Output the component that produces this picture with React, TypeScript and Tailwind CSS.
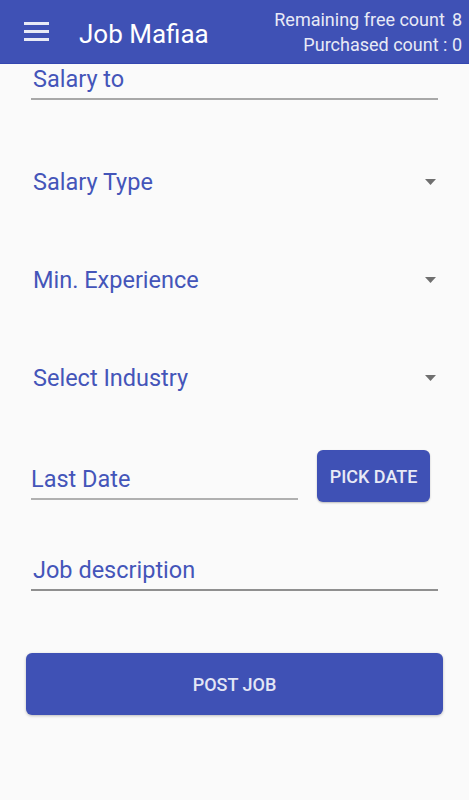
import React from "react";

const Arrow = () => (
  <svg width="11" height="6" viewBox="0 0 11 6" className="shrink-0">
    <path d="M0 0 H11 L5.5 6 Z" fill="#6f6f6f" />
  </svg>
);

const Spinner = ({ label }: { label: string }) => (
  <div className="h-[98px] flex items-center justify-between pl-[33px] pr-[33px]">
    <span className="text-[23.5px] leading-[30px] text-[#4455b9]">{label}</span>
    <Arrow />
  </div>
);

export default function App() {
  return (
    <div
      className="w-[469px] h-[800px] bg-[#fafafa] flex flex-col"
      style={{ fontFamily: "Roboto, 'Noto Sans', sans-serif" }}
    >
      <header className="h-[64px] bg-[#3f51b5] border-b border-[#3447b0] flex items-center pl-[24px] pr-[7px] shrink-0">
        <div className="flex flex-col gap-[5px] w-[25px]">
          <div className="h-[3px] bg-[#e8eaf6]" />
          <div className="h-[3px] bg-[#e8eaf6]" />
          <div className="h-[3px] bg-[#e8eaf6]" />
        </div>
        <div className="ml-[30px] text-[26px] text-white leading-[30px] mt-[4px]">Job Mafiaa</div>
        <div className="ml-auto flex flex-col items-end text-[18px] leading-[25px] text-[#e8eaf6]">
          <div className="flex gap-[7px]">
            <span>Remaining free count</span>
            <span>8</span>
          </div>
          <div>Purchased count : 0</div>
        </div>
      </header>

      <div className="px-[31px]">
        <div className="pl-[2px] text-[23.5px] leading-[30px] text-[#4455b9]">Salary to</div>
        <div className="mt-[4px] h-[2px] bg-[#a8a8a8]" />
      </div>

      <div className="h-[33px]" />
      <Spinner label="Salary Type" />
      <Spinner label="Min. Experience" />
      <Spinner label="Select Industry" />

      <div className="mt-[23px] flex items-start pl-[31px] pr-[39px] gap-[19px]">
        <div className="flex-1 h-[50px] flex flex-col justify-end">
          <div className="text-[23.5px] leading-[30px] text-[#4455b9]">Last Date</div>
          <div className="mt-[4px] h-[2px] bg-[#b0b0b0]" />
        </div>
        <button className="w-[113px] h-[52px] rounded-[6px] bg-[#3f51b5] text-[#e8eaf6] text-[18px] font-medium shadow-[0_1px_2px_rgba(0,0,0,0.25)]">
          PICK DATE
        </button>
      </div>

      <div className="px-[31px] mt-[53px]">
        <div className="pl-[2px] text-[23.5px] leading-[30px] text-[#4455b9]">Job description</div>
        <div className="mt-[4px] h-[2px] bg-[#8f8f8f]" />
      </div>

      <div className="px-[26px] mt-[62px]">
        <button className="w-full h-[62px] rounded-[6px] bg-[#3f51b5] text-[#e3e6f5] text-[18px] font-medium shadow-[0_1px_3px_rgba(0,0,0,0.25)]">
          POST JOB
        </button>
      </div>
    </div>
  );
}
